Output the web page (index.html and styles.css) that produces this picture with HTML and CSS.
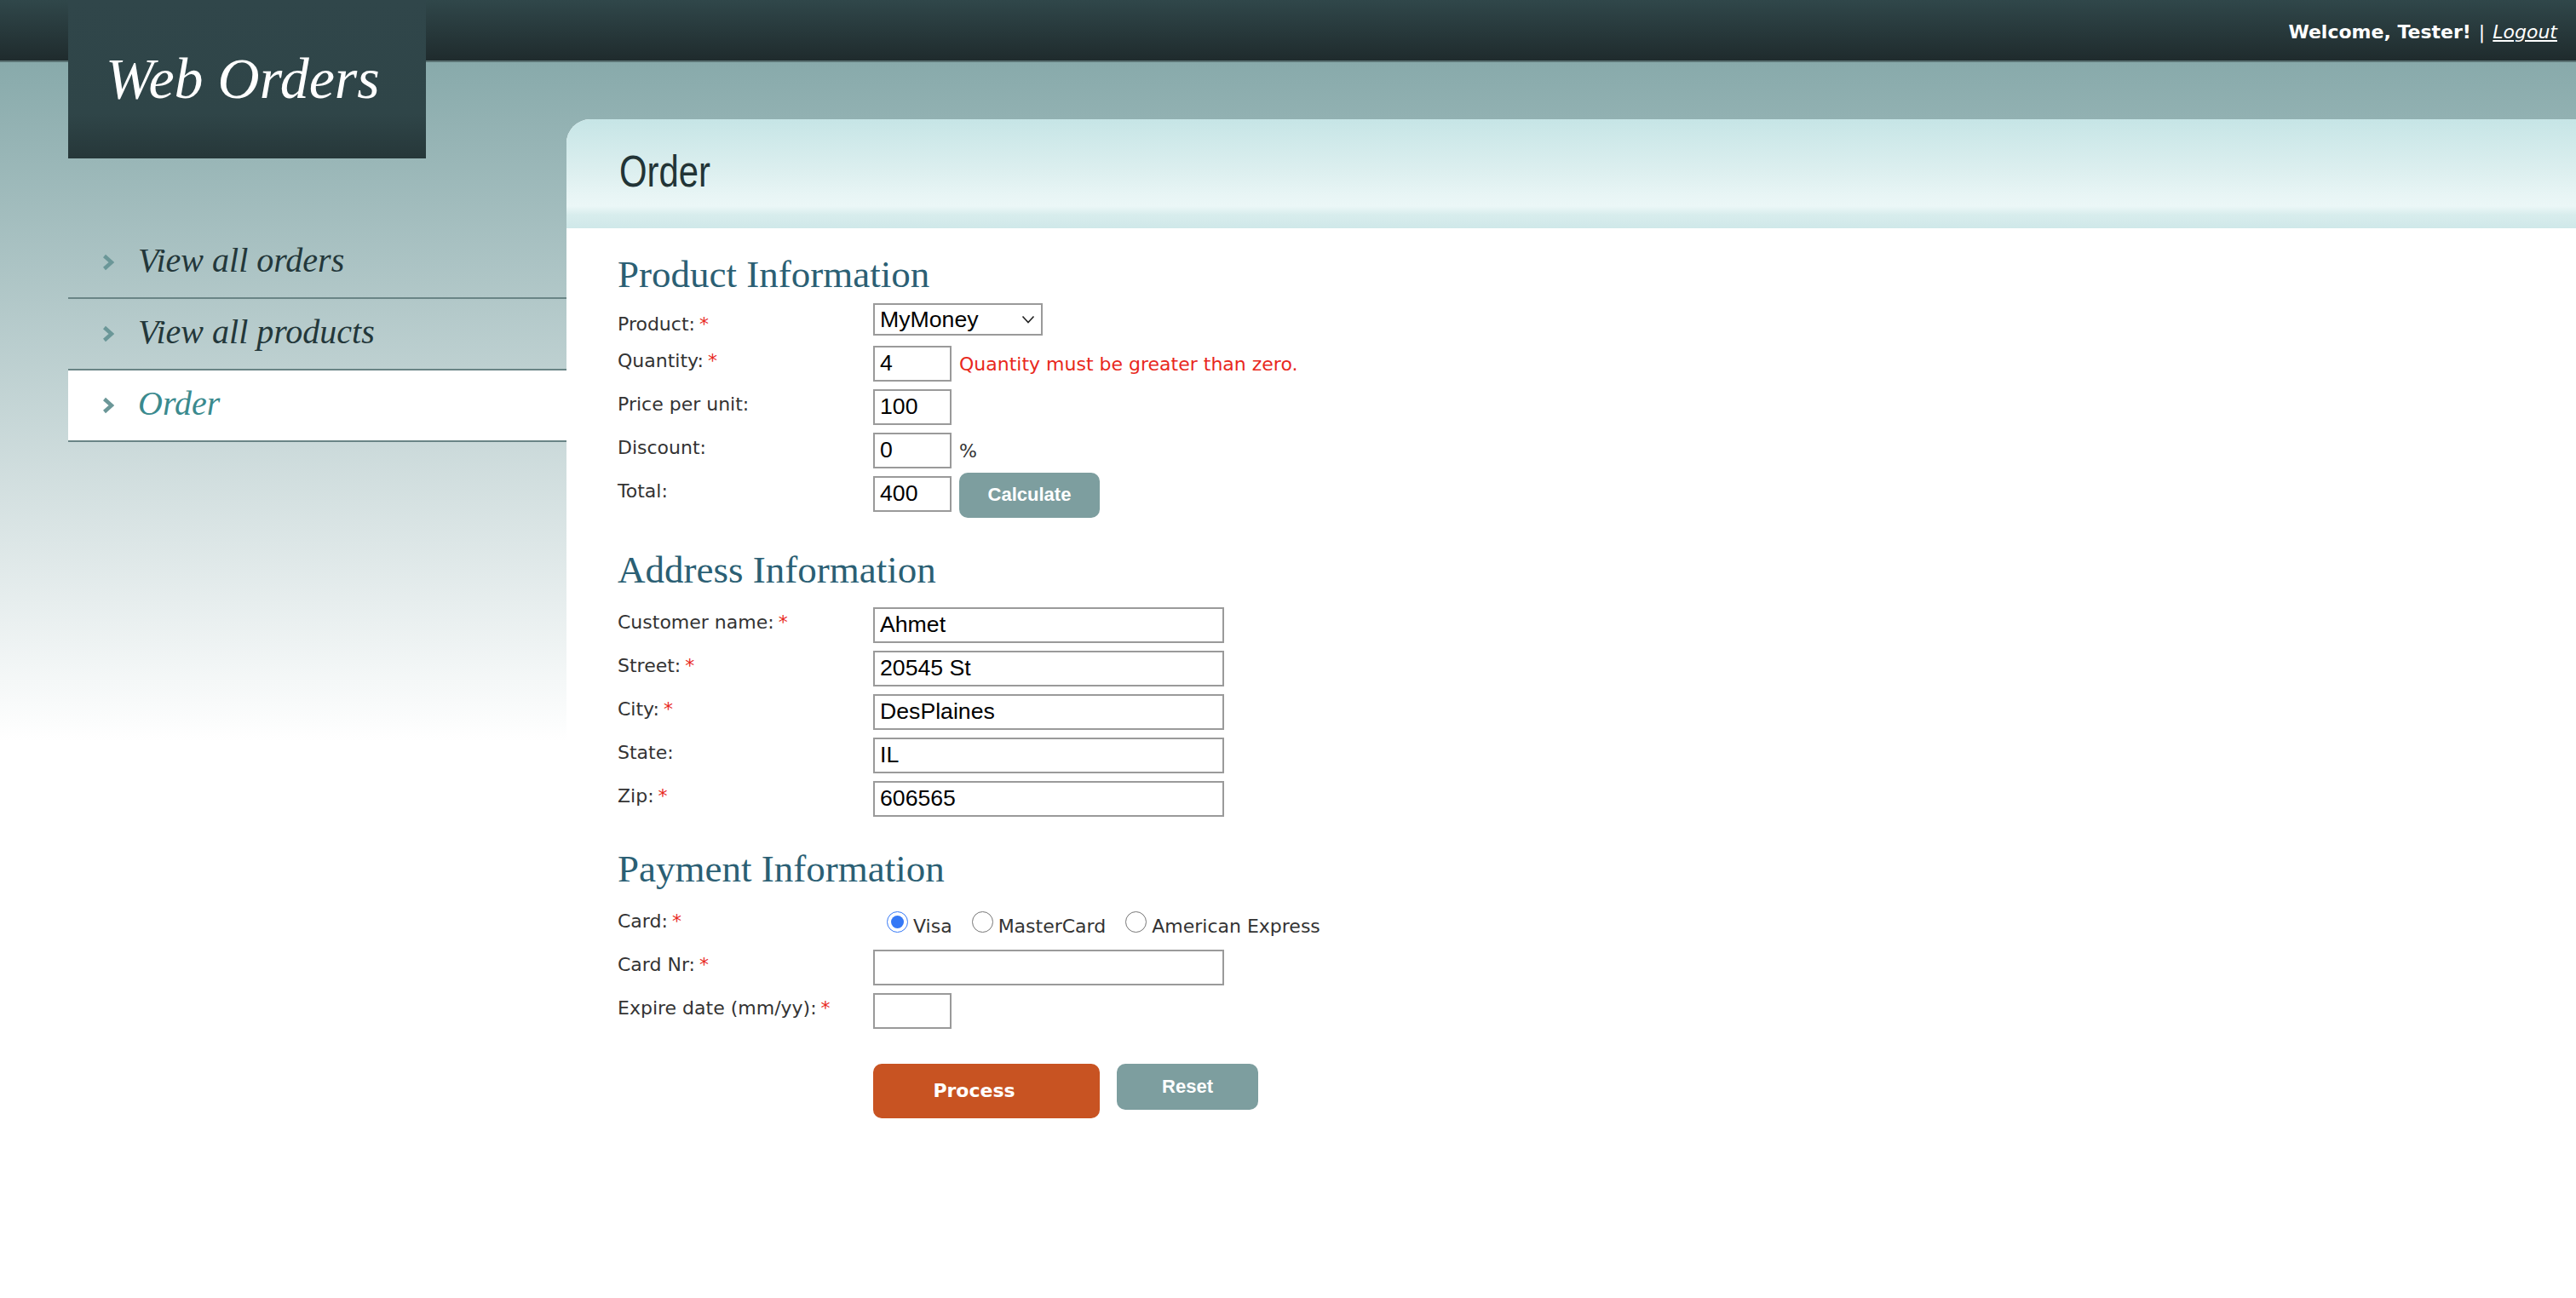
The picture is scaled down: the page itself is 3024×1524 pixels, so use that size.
FILE: index.html
```html
<!DOCTYPE html>
<html lang="en">
<head>
<meta charset="utf-8">
<title>Web Orders</title>
<link rel="stylesheet" href="styles.css">
</head>
<body>
<div class="layout">
  <aside class="sidebar">
    <div class="logo">Web Orders</div>
    <ul class="nav">
      <li class="nav-item">
        <svg class="chev" width="14" height="20" viewBox="0 0 14 20"><path d="M2.5 2.5 L11 10 L2.5 17.5" fill="none" stroke="#6b9798" stroke-width="4.5"/></svg>
        <a class="nav-link" href="#">View all orders</a>
      </li>
      <li class="nav-item">
        <svg class="chev" width="14" height="20" viewBox="0 0 14 20"><path d="M2.5 2.5 L11 10 L2.5 17.5" fill="none" stroke="#6b9798" stroke-width="4.5"/></svg>
        <a class="nav-link" href="#">View all products</a>
      </li>
      <li class="nav-item active">
        <svg class="chev" width="14" height="20" viewBox="0 0 14 20"><path d="M2.5 2.5 L11 10 L2.5 17.5" fill="none" stroke="#6b9798" stroke-width="4.5"/></svg>
        <a class="nav-link" href="#">Order</a>
      </li>
    </ul>
  </aside>

  <div class="main">
    <div class="userbar">
      <span class="welcome">Welcome, Tester!</span> <span class="sep">|</span> <a class="logout" href="#">Logout</a>
    </div>

    <div class="panel">
      <div class="panel-head">
        <h1 class="title">Order</h1>
      </div>

      <form class="panel-body">
        <section class="section">
          <h2 class="section-title">Product Information</h2>
          <div class="rows">
            <div class="row row-select">
              <label class="label">Product:<span class="req">*</span></label>
              <div class="control">
                <span class="select-wrap">
                  <select class="select"><option>MyMoney</option><option>FamilyAlbum</option><option>ScreenSaver</option></select>
                  <svg class="select-arrow" width="16" height="10" viewBox="0 0 16 10"><path d="M1.5 1.5 L8 8.5 L14.5 1.5" fill="none" stroke="#222" stroke-width="1.6"/></svg>
                </span>
              </div>
            </div>
            <div class="row">
              <label class="label">Quantity:<span class="req">*</span></label>
              <div class="control">
                <input class="input input-sm" type="text" value="4">
                <span class="note error">Quantity must be greater than zero.</span>
              </div>
            </div>
            <div class="row">
              <label class="label">Price per unit:</label>
              <div class="control">
                <input class="input input-sm" type="text" value="100">
              </div>
            </div>
            <div class="row">
              <label class="label">Discount:</label>
              <div class="control">
                <input class="input input-sm" type="text" value="0">
                <span class="note">%</span>
              </div>
            </div>
            <div class="row">
              <label class="label">Total:</label>
              <div class="control">
                <input class="input input-sm" type="text" value="400">
                <button class="btn btn-calc" type="button">Calculate</button>
              </div>
            </div>
          </div>
        </section>

        <section class="section">
          <h2 class="section-title">Address Information</h2>
          <div class="rows">
            <div class="row">
              <label class="label">Customer name:<span class="req">*</span></label>
              <div class="control"><input class="input input-lg" type="text" value="Ahmet"></div>
            </div>
            <div class="row">
              <label class="label">Street:<span class="req">*</span></label>
              <div class="control"><input class="input input-lg" type="text" value="20545 St"></div>
            </div>
            <div class="row">
              <label class="label">City:<span class="req">*</span></label>
              <div class="control"><input class="input input-lg" type="text" value="DesPlaines"></div>
            </div>
            <div class="row">
              <label class="label">State:</label>
              <div class="control"><input class="input input-lg" type="text" value="IL"></div>
            </div>
            <div class="row">
              <label class="label">Zip:<span class="req">*</span></label>
              <div class="control"><input class="input input-lg" type="text" value="606565"></div>
            </div>
          </div>
        </section>

        <section class="section">
          <h2 class="section-title">Payment Information</h2>
          <div class="rows">
            <div class="row">
              <label class="label">Card:<span class="req">*</span></label>
              <div class="control radios">
                <label class="radio"><input type="radio" name="card" checked><span class="radio-text">Visa</span></label>
                <label class="radio"><input type="radio" name="card"><span class="radio-text">MasterCard</span></label>
                <label class="radio"><input type="radio" name="card"><span class="radio-text">American Express</span></label>
              </div>
            </div>
            <div class="row">
              <label class="label">Card Nr:<span class="req">*</span></label>
              <div class="control"><input class="input input-lg" type="text" value=""></div>
            </div>
            <div class="row">
              <label class="label">Expire date (mm/yy):<span class="req">*</span></label>
              <div class="control"><input class="input input-sm" type="text" value=""></div>
            </div>
          </div>
        </section>

        <div class="actions">
          <button class="btn btn-process" type="button">Process</button>
          <button class="btn btn-reset" type="reset">Reset</button>
        </div>
      </form>
    </div>
  </div>
</div>
</body>
</html>
```

FILE: styles.css
```css
* {
  box-sizing: border-box;
}

html, body {
  margin: 0;
  padding: 0;
}

body {
  min-height: 1524px;
  background-color: #fff;
  background-image: linear-gradient(180deg,
    #30474a 0px, #1f2b2d 71px,
    #5a7374 71px, #5a7374 73px,
    #88aaab 73px, #ffffff 870px);
  background-repeat: no-repeat;
  font-family: "DejaVu Sans", Verdana, sans-serif;
  font-size: 22px;
  color: #333;
}

.layout {
  display: flex;
  min-height: 1524px;
}

/* ---------- sidebar ---------- */
.sidebar {
  flex: 0 0 585px;
  margin-left: 80px;
}

.logo {
  width: 420px;
  height: 186px;
  padding: 58px 0 0 44px;
  background: linear-gradient(180deg, #30464a 0%, #2f4548 72%, #263739 100%);
  color: #fff;
  font-family: "Liberation Serif", "Times New Roman", serif;
  font-style: italic;
  font-size: 68px;
  line-height: 68px;
}

.nav {
  list-style: none;
  margin: 81px 0 0;
  padding: 0;
}

.nav-item {
  display: flex;
  align-items: center;
  height: 84px;
  padding: 0 0 4px 40px;
  border-bottom: 2px solid #6a8586;
}

.nav-item.active {
  background: #fff;
}

.chev {
  flex: 0 0 auto;
  margin-top: 4px;
}

.nav-link {
  margin-left: 28px;
  font-family: "Liberation Serif", "Times New Roman", serif;
  font-style: italic;
  font-size: 40px;
  line-height: 40px;
  color: #23373a;
  text-decoration: none;
}

.active .nav-link {
  color: #3a8a8e;
}

/* ---------- main ---------- */
.main {
  flex: 1;
  display: flex;
  flex-direction: column;
}

.userbar {
  height: 140px;
  padding: 25px 22px 0 0;
  text-align: right;
  color: #fff;
  line-height: 26px;
}

.welcome {
  font-weight: bold;
}

.sep {
  margin: 0 2px;
}

.logout {
  color: #fff;
  font-style: italic;
  text-decoration: underline;
}

.panel {
  flex: 1;
  background: #fff;
  border-top-left-radius: 28px;
}

.panel-head {
  height: 128px;
  padding: 35px 0 0 62px;
  border-top-left-radius: 28px;
  background: linear-gradient(180deg,
    #c6e5e6 0px, #dcefef 60px, #e8f5f5 90px, #ebf7f7 102px,
    #d8eded 112px, #cfe8e9 128px);
}

.title {
  display: inline-block;
  margin: 0;
  font-family: "Liberation Sans", Arial, sans-serif;
  font-weight: normal;
  font-size: 52px;
  line-height: 52px;
  color: #223436;
  transform: scaleX(0.805);
  transform-origin: 0 50%;
}

.panel-body {
  display: flex;
  flex-direction: column;
  gap: 33.5px;
  padding: 26px 0 40px 60px;
}

.section-title {
  margin: 0 0 15.5px;
  font-family: "Liberation Serif", "Times New Roman", serif;
  font-weight: normal;
  font-size: 45px;
  line-height: 56px;
  color: #2b5f74;
}

.rows {
  display: flex;
  flex-direction: column;
  gap: 9px;
}

.row {
  display: flex;
  align-items: flex-start;
  min-height: 42px;
}

.row-select {
  margin-top: -10px;
  min-height: 41px;
}

.label {
  flex: 0 0 300px;
  padding-top: 5px;
  line-height: 26px;
  color: #333;
}

.row-select .label {
  padding-top: 12px;
}

.req {
  margin-left: 5px;
  color: #e8281c;
}

.control {
  display: flex;
  align-items: flex-start;
  gap: 9px;
}

.note {
  padding-top: 9px;
  line-height: 26px;
}

.error {
  color: #e8281c;
}

/* ---------- form controls ---------- */
.select-wrap {
  position: relative;
  display: inline-block;
}

.select {
  appearance: none;
  -webkit-appearance: none;
  display: block;
  width: 199px;
  height: 38px;
  margin: 0;
  padding: 0 0 0 6px;
  border: 2px solid #9a9a9a;
  border-radius: 0;
  background: #fff;
  color: #000;
  font-family: "Liberation Sans", Arial, sans-serif;
  font-size: 26.67px;
}

.select-arrow {
  position: absolute;
  right: 9px;
  top: 14px;
  pointer-events: none;
}

.input {
  display: block;
  height: 42px;
  margin: 0;
  padding: 0 6px;
  border: 2px solid #9a9a9a;
  border-radius: 0;
  background: #fff;
  color: #000;
  font-family: "Liberation Sans", Arial, sans-serif;
  font-size: 26.67px;
}

.input-sm {
  width: 92px;
}

.input-lg {
  width: 412px;
}

.radios {
  gap: 23px;
  padding-left: 16px;
}

.radio {
  display: flex;
  align-items: flex-start;
}

.radio input {
  width: 25px;
  height: 25px;
  margin: 6px 6px 0 0;
  accent-color: #3478f6;
}

.radio-text {
  padding-top: 11px;
  line-height: 26px;
  color: #333;
}

.btn {
  border: 0;
  border-radius: 10px;
  color: #fff;
  cursor: pointer;
  font-family: "Liberation Sans", Arial, sans-serif;
  font-weight: bold;
  font-size: 22px;
  padding: 0;
}

.btn-calc {
  width: 165px;
  height: 53px;
  margin-top: -4px;
  background: #7d9e9f;
}

.actions {
  display: flex;
  align-items: flex-start;
  gap: 20px;
  margin: 7.5px 0 0 300px;
}

.btn-process {
  width: 266px;
  height: 64px;
  padding-right: 29px;
  background: #c85322;
  font-family: "DejaVu Sans", Verdana, sans-serif;
}

.btn-reset {
  width: 166px;
  height: 54px;
  background: #7d9e9f;
}
```
